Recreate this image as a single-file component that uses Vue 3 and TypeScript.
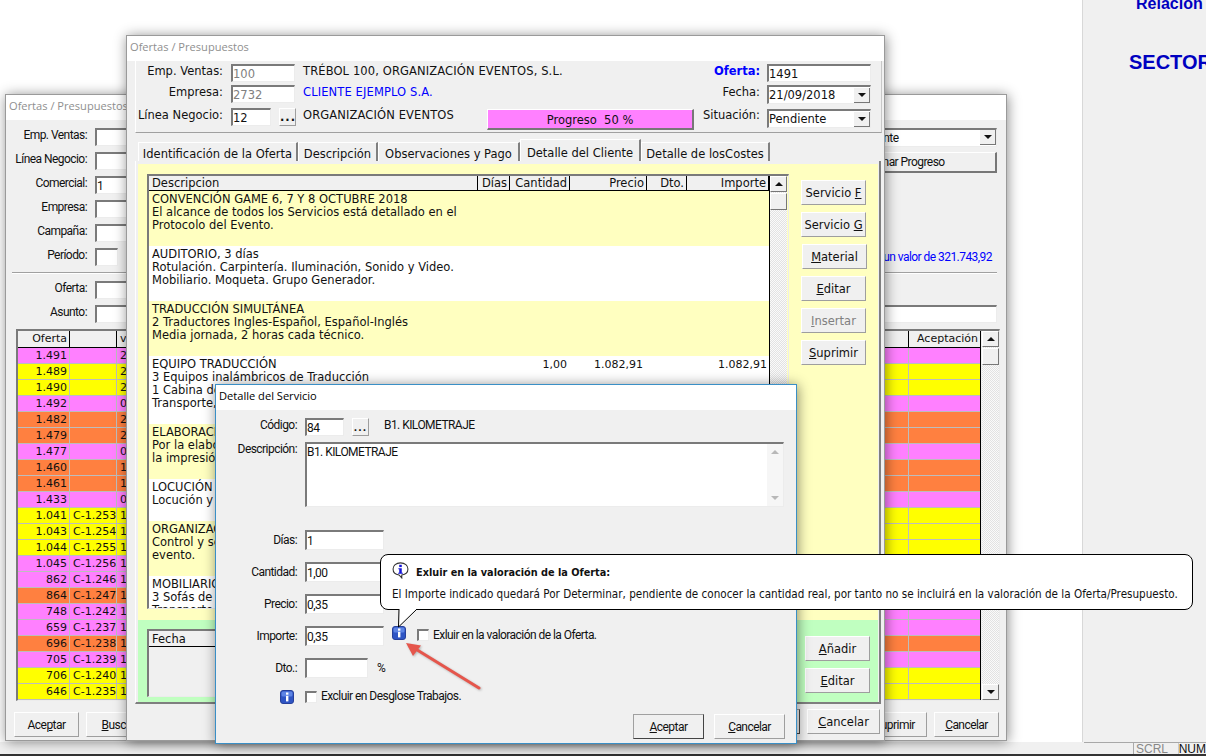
<script setup lang="ts">
type Tone = 'pink' | 'yellow' | 'orange'
interface Offer { id: string; ref: string; date: string; tone: Tone }
interface Line { lines: string[]; qty?: string; price?: string; total?: string }

const offers: Offer[] = [
  { id: '1.491', ref: '', date: '21/09/2018', tone: 'pink' },
  { id: '1.489', ref: '', date: '21/09/2018', tone: 'yellow' },
  { id: '1.490', ref: '', date: '21/09/2018', tone: 'yellow' },
  { id: '1.492', ref: '', date: '01/10/2018', tone: 'pink' },
  { id: '1.482', ref: '', date: '20/07/2018', tone: 'orange' },
  { id: '1.479', ref: '', date: '20/07/2018', tone: 'orange' },
  { id: '1.477', ref: '', date: '02/07/2018', tone: 'pink' },
  { id: '1.460', ref: '', date: '15/05/2018', tone: 'orange' },
  { id: '1.461', ref: '', date: '15/05/2018', tone: 'orange' },
  { id: '1.433', ref: '', date: '09/04/2018', tone: 'pink' },
  { id: '1.041', ref: 'C-1.253', date: '10/11/2017', tone: 'yellow' },
  { id: '1.043', ref: 'C-1.254', date: '10/11/2017', tone: 'yellow' },
  { id: '1.044', ref: 'C-1.255', date: '10/11/2017', tone: 'yellow' },
  { id: '1.045', ref: 'C-1.256', date: '10/11/2017', tone: 'pink' },
  { id: '862', ref: 'C-1.246', date: '12/06/2017', tone: 'pink' },
  { id: '864', ref: 'C-1.247', date: '12/06/2017', tone: 'orange' },
  { id: '748', ref: 'C-1.242', date: '10/03/2017', tone: 'pink' },
  { id: '659', ref: 'C-1.237', date: '10/01/2017', tone: 'pink' },
  { id: '696', ref: 'C-1.238', date: '10/01/2017', tone: 'orange' },
  { id: '705', ref: 'C-1.239', date: '10/01/2017', tone: 'pink' },
  { id: '706', ref: 'C-1.240', date: '10/01/2017', tone: 'yellow' },
  { id: '646', ref: 'C-1.235', date: '10/01/2017', tone: 'yellow' },
]

const details: Line[] = [
  { lines: ['CONVENCIÓN GAME 6, 7 Y 8 OCTUBRE 2018', 'El alcance de todos los Servicios está detallado en el', 'Protocolo del Evento.'] },
  { lines: ['AUDITORIO, 3 días', 'Rotulación. Carpintería. Iluminación, Sonido y Video.', 'Mobiliario. Moqueta. Grupo Generador.'] },
  { lines: ['TRADUCCIÓN SIMULTÁNEA', '2 Traductores Ingles-Español, Español-Inglés', 'Media jornada, 2 horas cada técnico.'] },
  { lines: ['EQUIPO TRADUCCIÓN', '3 Equipos inalámbricos de Traducción', '1 Cabina de Traducción', 'Transporte, montaje y desmontaje.'], qty: '1,00', price: '1.082,91', total: '1.082,91' },
  { lines: ['ELABORACIÓN DE TEXTOS', 'Por la elaboración de los textos y', 'la impresión de los mismos.'] },
  { lines: ['LOCUCIÓN', 'Locución y grabación.'] },
  { lines: ['ORGANIZACIÓN', 'Control y seguimiento del', 'evento.'] },
  { lines: ['MOBILIARIO', '3 Sofás de piel', 'Transporte incluido.'] },
]

const sideButtons = [
  { pre: 'Servicio ', key: 'F', post: '', extra: '' },
  { pre: 'Servicio ', key: 'G', post: '', extra: '' },
  { pre: '', key: 'M', post: 'aterial', extra: 'shift' },
  { pre: '', key: 'E', post: 'ditar', extra: '' },
  { pre: '', key: 'I', post: 'nsertar', extra: 'off' },
  { pre: '', key: 'S', post: 'uprimir', extra: '' },
]
</script>

<template>
  <div class="screen">
    <div class="workspace">
      <div class="desk"></div>
      <aside class="sidepanel">
        <div class="rel">Relacion</div>
        <div class="sector">SECTOR</div>
      </aside>
    </div>
    <footer class="status">
      <span class="cell scrl">SCRL</span>
      <span class="cell numlock">NUM</span>
    </footer>
    <div class="strip"></div>

    <!-- Ventana trasera -->
    <section class="win win-a narrow">
      <header class="title muted">Ofertas / Presupuestos</header>
      <div class="filters">
        <div class="frow"><label>Emp. Ventas:</label><div class="field w100"></div><div class="field combo a-combo"><span>Pendiente</span><i class="drop"></i></div></div>
        <div class="frow"><label>Línea Negocio:</label><div class="field w100"></div><button class="btn prog">Determinar Progreso</button></div>
        <div class="frow"><label>Comercial:</label><div class="field w100">1</div></div>
        <div class="frow"><label>Empresa:</label><div class="field w100"></div></div>
        <div class="frow"><label>Campaña:</label><div class="field w100"></div></div>
        <div class="frow"><label>Período:</label><div class="field w23"></div><span class="sum">22 Ofertas por un valor de 321.743,92</span></div>
      </div>
      <div class="sep"></div>
      <div class="filters two">
        <div class="frow"><label>Oferta:</label><div class="field w100"></div></div>
        <div class="frow"><label>Asunto:</label><div class="field wfull"></div></div>
      </div>
      <div class="gridA">
        <div class="tableA">
          <div class="ohead">
            <span class="r">Oferta</span><span></span><span class="l">vencimiento</span><span class="r">Aceptación</span>
          </div>
          <div v-for="o in offers" :key="o.id" class="orow" :class="o.tone">
            <span class="r">{{ o.id }}</span><span class="l">{{ o.ref }}</span><span class="l">{{ o.date }}</span><span></span>
          </div>
          <div class="tail"></div>
        </div>
        <div class="vbar a">
          <i class="sb up"></i><i class="thumb"></i><b></b><i class="sb down"></i>
        </div>
      </div>
      <div class="footA">
        <button class="btn b65">Ace<u>p</u>tar</button>
        <button class="btn b65"><u>B</u>uscar</button>
        <span class="grow"></span>
        <button class="btn b65"><u>S</u>uprimir</button>
        <button class="btn b65"><u>C</u>ancelar</button>
      </div>
    </section>

    <!-- Ventana principal -->
    <section class="win win-b">
      <header class="title muted">Ofertas / Presupuestos</header>
      <div class="head">
        <div class="hrow r1">
          <label>Emp. Ventas:</label><div class="field w64 dis">100</div>
          <span class="htxt">TRÉBOL 100, ORGANIZACIÓN EVENTOS, S.L.</span>
          <label class="rl blue">Oferta:</label><div class="field w104">1491</div>
        </div>
        <div class="hrow r2">
          <label>Empresa:</label><div class="field w64 dis">2732</div>
          <span class="htxt link">CLIENTE EJEMPLO S.A.</span>
          <label class="rl">Fecha:</label><div class="field combo w104"><span>21/09/2018</span><i class="drop"></i></div>
        </div>
        <div class="hrow r3">
          <label>Línea Negocio:</label><div class="field w40">12</div><button class="btn dots">...</button>
          <span class="htxt short">ORGANIZACIÓN EVENTOS</span>
          <div class="progress">Progreso&nbsp;&nbsp;50 %</div>
          <label class="rl narrow-l">Situación:</label><div class="field combo w104"><span>Pendiente</span><i class="drop"></i></div>
        </div>
      </div>
      <nav class="tabs">
        <span class="tab t1">Identificación de la Oferta</span>
        <span class="tab t2">Descripción</span>
        <span class="tab t3">Observaciones y Pago</span>
        <span class="tab t4 on">Detalle del Cliente</span>
        <span class="tab t5">Detalle de losCostes</span>
      </nav>
      <div class="panel">
        <div class="yellow">
          <div class="gridB">
            <div class="tableB">
              <div class="dhead">
                <span>Descripcion</span><span class="r">Días</span><span class="r">Cantidad</span><span class="r">Precio</span><span class="r">Dto.</span><span class="r">Importe</span>
              </div>
              <div class="dbody">
                <div v-for="(d, i) in details" :key="i" class="drow" :class="{ odd: i % 2 === 0 }">
                  <div class="dtext"><div v-for="l in d.lines" :key="l">{{ l }}</div></div>
                  <span></span>
                  <span class="r c-q">{{ d.qty }}</span>
                  <span class="r c-p">{{ d.price }}</span>
                  <span></span>
                  <span class="r c-t">{{ d.total }}</span>
                </div>
              </div>
            </div>
            <div class="vbar b">
              <i class="sb up"></i><i class="thumb"></i><b></b>
            </div>
          </div>
          <div class="sidebtns">
            <button v-for="b in sideButtons" :key="b.key" class="btn b65" :class="b.extra">{{ b.pre }}<u>{{ b.key }}</u>{{ b.post }}</button>
          </div>
        </div>
        <div class="green">
          <div class="gridC"><div class="chead">Fecha</div></div>
          <div class="greenbtns">
            <button class="btn b65"><u>A</u>ñadir</button>
            <button class="btn b65"><u>E</u>ditar</button>
          </div>
        </div>
      </div>
      <div class="footB">
        <button class="btn b73 def"><u>A</u>ceptar</button>
        <button class="btn b73"><u>C</u>ancelar</button>
      </div>
    </section>

    <!-- Diálogo -->
    <section class="win dlg narrow">
      <header class="title">Detalle del Servicio</header>
      <div class="dbodyform">
        <div class="drow2 cod">
          <label>Código:</label><div class="field w39">84</div><button class="btn dots">...</button><span class="codtxt">B1. KILOMETRAJE</span>
        </div>
        <div class="drow2 desc">
          <label>Descripción:</label>
          <div class="field area">
            <span>B1. KILOMETRAJE</span>
            <div class="fadebar"><i></i><i class="dn"></i></div>
          </div>
        </div>
        <div class="drow2 numrow first"><label>Días:</label><div class="field w79">1</div></div>
        <div class="drow2 numrow"><label>Cantidad:</label><div class="field w79">1,00</div></div>
        <div class="drow2 numrow"><label>Precio:</label><div class="field w79">0,35</div></div>
        <div class="drow2 numrow">
          <label>Importe:</label><div class="field w79">0,35</div>
          <svg class="info after" viewBox="0 0 14 14" aria-hidden="true"><rect x=".5" y=".5" width="13" height="13" rx="2.5" fill="#2f55c4" stroke="#27409a"/><rect x="1.5" y="1.5" width="11" height="5" rx="1.5" fill="#5d84e4"/><rect x="6" y="2.5" width="2.4" height="2.2" fill="#fff"/><rect x="6" y="5.8" width="2.4" height="5.6" fill="#fff"/></svg>
          <span class="check"></span><span class="chk-l">Exluir en la valoración de la Oferta.</span>
        </div>
        <div class="drow2 numrow">
          <label>Dto.:</label><div class="field w63"></div><span class="pct">%</span>
        </div>
        <div class="drow2 last">
          <div class="iconcell">
            <svg class="info" viewBox="0 0 14 14" aria-hidden="true"><rect x=".5" y=".5" width="13" height="13" rx="2.5" fill="#2f55c4" stroke="#27409a"/><rect x="1.5" y="1.5" width="11" height="5" rx="1.5" fill="#5d84e4"/><rect x="6" y="2.5" width="2.4" height="2.2" fill="#fff"/><rect x="6" y="5.8" width="2.4" height="5.6" fill="#fff"/></svg>
          </div>
          <span class="check first-c"></span><span class="chk-l">Excluir en Desglose Trabajos.</span>
        </div>
        <div class="dfoot">
          <button class="btn b71 def"><u>A</u>ceptar</button>
          <button class="btn b71"><u>C</u>ancelar</button>
        </div>
      </div>
    </section>

    <!-- Globo de ayuda -->
    <div class="tip">
      <svg class="tipicon" viewBox="0 0 16 16" aria-hidden="true">
        <path d="M8 .8C3.8.8 1 3.3 1 6.600c0 3 2.300 5.200 5.600 5.600l2.600 2.800v-2.800c3.400-.4 5.800-2.600 5.800-5.600C15 3.300 12.200.8 8 .8z" fill="#fff" stroke="#333" stroke-width="1"/>
        <rect x="6.800" y="2.600" width="2.400" height="2.200" fill="#1515d8"/>
        <path d="M6 5.800h3.200v4.200H10.200v1H5.800v-1h1V6.800H6z" fill="#1515d8"/>
      </svg>
      <div class="tiptitle">Exluir en la valoración de la Oferta:</div>
      <div class="tipbody">El Importe indicado quedará Por Determinar, pendiente de conocer la cantidad real, por tanto no se incluirá en la valoración de la Oferta/Presupuesto.</div>
      <svg class="tiptail" viewBox="0 0 24 22" aria-hidden="true">
        <path d="M3 0 L2.500 18 L21 0" fill="#fff"/>
        <path d="M3 0 L2.500 18 L21 0" fill="none" stroke="#000" stroke-width="1"/>
      </svg>
    </div>

    <!-- Flecha -->
    <svg class="arrow" viewBox="0 0 90 60" aria-hidden="true">
      <path d="M77 50 L12 10" stroke="#e5564c" stroke-width="3" stroke-linecap="round"/>
      <path d="M4 5 L19 7.500 L11 18 Z" fill="#e5564c"/>
    </svg>
  </div>
</template>

<style>
html, body { margin: 0; padding: 0; background: #fff; overflow: hidden; }
</style>

<style scoped>
.screen {
  position: relative;
  width: 1206px;
  height: 756px;
  overflow: hidden;
  display: flex;
  flex-direction: column;
  font-family: "DejaVu Sans", Verdana, sans-serif;
  font-size: 11.500px;
  color: #111;
  background: #f0f0f0;
}
.workspace { flex: 1; display: flex; min-height: 0; }
.desk { flex: 1; background: #fff; }
.sidepanel {
  width: 124px;
  box-sizing: border-box;
  border-left: 1px solid #d8d8d8;
  box-shadow: -1px 0 0 #fff;
  background: #f0f0f0;
  padding-left: 46px;
  font-family: "Liberation Sans", Arial, sans-serif;
  font-weight: 700;
  color: #0000c0;
  white-space: nowrap;
  overflow: hidden;
}
.rel { font-size: 16px; line-height: 16px; margin: -4px 0 0 7px; }
.sector { font-size: 20px; line-height: 24px; margin-top: 38px; margin-left: 0; }
.status {
  height: 11px;
  flex: none;
  border-top: 1px solid #a8a8a8;
  margin-left: 1084px;
  display: flex;
  font-family: "Liberation Sans", Arial, sans-serif;
  font-size: 12px;
  line-height: 11px;
  overflow: hidden;
}
.cell { border-left: 1px solid #aaa; }
.scrl { margin-left: 49px; padding: 1px 0 0 2px; color: #888; width: 41px; box-sizing: border-box; }
.numlock { margin-left: 9px; padding: 1px 0 0 0; color: #111; border-left-color: #ccc; }
.strip { height: 2px; flex: none; background: #333; }

.win {
  position: absolute;
  box-sizing: border-box;
  background: #f0f0f0;
  border: 1px solid #9a9a9a;
  box-shadow: 1px 1px 12px rgba(0, 0, 0, .45);
  display: flex;
  flex-direction: column;
}
.win-a { left: 5px; top: 94px; width: 1002px; height: 647px; }
.win-b { left: 126px; top: 35px; width: 759px; height: 706px; }
.dlg { left: 215px; top: 384px; width: 582px; height: 360px; border-color: #3a8fc6; }
.title {
  height: 25px;
  flex: none;
  background: #fff;
  font-family: "Open Sans", "Noto Sans", sans-serif;
  font-size: 11.100px;
  line-height: 22px;
  padding-left: 3px;
  white-space: nowrap;
  color: #000;
}
.title.muted { color: #8f8f8f; }
.narrow { font-family: Roboto, "Liberation Sans", sans-serif; font-size: 12px; letter-spacing: -.55px; }
.narrow .title { font-family: "Open Sans", "Noto Sans", sans-serif; font-size: 11.100px; letter-spacing: 0; }

.field {
  box-sizing: border-box;
  background: #fff;
  border-style: solid;
  border-width: 2px 1px 1px 2px;
  border-color: #7a7a7a #ececec #ececec #7a7a7a;
  padding-left: 0;
  overflow: hidden;
  white-space: nowrap;
  display: flex;
  align-items: center;
  flex: none;
}
.combo { justify-content: space-between; padding-right: 0; }
.drop {
  width: 16px;
  height: 15px;
  flex: none;
  background: #f0f0f0;
  border-right: 1px solid #777;
  border-bottom: 1px solid #777;
  box-sizing: border-box;
  position: relative;
}
.drop::after, .sb::after {
  content: "";
  position: absolute;
  left: 50%;
  top: 50%;
  margin: -2px 0 0 -4px;
  border-left: 4px solid transparent;
  border-right: 4px solid transparent;
  border-top: 4px solid #111;
}
.sb.up::after { border-top: 0; border-bottom: 4px solid #111; }

.btn {
  box-sizing: border-box;
  height: 25px;
  padding: 0;
  font: inherit;
  letter-spacing: inherit;
  color: #111;
  background: #f0f0f0;
  border: 1px solid;
  border-color: #fff #9e9e9e #9e9e9e #fff;
  white-space: nowrap;
  flex: none;
}
.btn u { text-underline-offset: 1px; }
.b65 { width: 65px; }
.b73 { width: 73px; }
.b71 { width: 71px; }
.def { border-color: #a0a0a0 #444 #444 #a0a0a0; }
.dots {
  width: 17px;
  height: 18px;
  line-height: 12px;
  font-weight: 700;
  letter-spacing: 1px;
}

/* ventana trasera */
.filters {
  display: grid;
  grid-auto-rows: 18px;
  row-gap: 6px;
  padding-top: 8px;
}
.filters.two { padding-top: 0; margin-top: 7px; }
.frow { display: flex; align-items: center; padding-right: 9px; }
.frow label { width: 81px; margin-right: 8px; margin-top: -4px; text-align: right; flex: none; }
.frow .field { height: 18px; }
.w100 { width: 100px; }
.w23 { width: 23px; }
.wfull { width: 902px; }
.a-combo { width: 149px; margin-left: auto; height: 19px !important; }
.prog {
  margin-left: auto;
  width: 204px;
  height: 21px;
  align-self: flex-start;
  border-color: #fff #777 #777 #fff;
  border-width: 1px 2px 2px 1px;
}
.sum { margin-left: auto; margin-right: 5px; color: #0000ff; }
.sep {
  margin: 6px 9px 0 6px;
  height: 0;
  border-top: 1px solid #a0a0a0;
  border-bottom: 1px solid #fff;
}
.gridA {
  margin: 6px 0 0 10px;
  width: 984px;
  height: 372px;
  box-sizing: border-box;
  border-style: solid;
  border-width: 2px 1px 1px 2px;
  border-color: #7a7a7a #ececec #ececec #7a7a7a;
  display: flex;
  background: #f0f0f0;
  flex: none;
}
.tableA {
  width: 964px;
  box-sizing: border-box;
  border-right: 1px solid #000;
  background: #f0f0f0;
  overflow: hidden;
  font-family: "DejaVu Sans", Verdana, sans-serif;
  font-size: 11px;
  letter-spacing: 0;
  margin-right: 1px;
}
.ohead, .orow {
  display: grid;
  grid-template-columns: 52px 47px 792px 72px;
  white-space: nowrap;
}
.ohead { height: 16px; line-height: 16px; border-bottom: 1px solid #000; }
.ohead span { border-right: 1px solid #000; overflow: hidden; }
.orow { height: 16px; box-sizing: border-box; line-height: 15px; border-bottom: 1px solid #bdbdbd; }
.orow span { border-right: 1px solid #bdbdbd; overflow: hidden; }
.r { text-align: right; padding-right: 2px; }
.l { text-align: left; padding-left: 3px; }
.pink { background: #ff80ff; }
.orow.yellow { background: #ffff00; }
.orange { background: #ff8040; }
.tail { height: 1px; background: #e080e0; }
.vbar {
  width: 17px;
  flex: none;
  display: flex;
  flex-direction: column;
  background-color: #f2f2f2;
  background-image: repeating-conic-gradient(#e2e2e2 0 25%, #fafafa 0 50%);
  background-size: 2px 2px;
}
.vbar b { flex: 1; }
.sb {
  position: relative;
  display: block;
  height: 16px;
  box-sizing: border-box;
  background: #f0f0f0;
  border: 1px solid;
  border-color: #fff #777 #777 #fff;
  flex: none;
}
.thumb {
  display: block;
  height: 17px;
  margin-top: 1px;
  box-sizing: border-box;
  background: #f0f0f0;
  border: 1px solid;
  border-color: #fff #777 #777 #fff;
  flex: none;
}
.footA {
  display: flex;
  margin-top: 11px;
  padding: 0 7px 0 8px;
  gap: 7px;
}
.grow { flex: 1; }

/* ventana principal */
.head {
  margin-left: 8px;
  width: 747px;
  height: 72px;
  flex: none;
  box-sizing: border-box;
  border-bottom: 1px solid #a0a0a0;
  border-left: 1px solid #fff;
  border-right: 1px solid #c8c8c8;
  display: flex;
  flex-direction: column;
  padding-top: 3px;
  white-space: nowrap;
}
.hrow { display: flex; align-items: flex-start; }
.r2 { margin-top: 3px; height: 20px; }
.r3 { margin-top: 3px; }
.r1 { height: 18px; }
.hrow label { width: 87px; text-align: right; margin-right: 8px; flex: none; }
.hrow .field { height: 18px; }
.hrow .combo { height: 19px; }
.r3 .combo { margin-top: 1px; }
.w64 { width: 64px; }
.w40 { width: 40px; }
.w104 { width: 104px; }
.dis { color: #808080; }
.htxt { margin-left: 8px; width: 360px; flex: none; letter-spacing: .12px; }
.hrow .rl { width: 97px; margin-right: 7px; margin-left: 0; }
.htxt.short { width: 184px; margin-left: 7px; }
.link { color: #0000ff; }
.blue { color: #0000ff; font-weight: 700; }
.r3 .dots { margin-left: 8px; }
.progress {
  width: 207px;
  height: 21px;
  flex: none;
  box-sizing: border-box;
  background: #ff80ff;
  border: 1px solid;
  border-width: 1px 2px 2px 1px;
  border-color: #fff #777 #777 #fff;
  text-align: center;
  line-height: 20px;
  margin-top: 1px;
}
.hrow .narrow-l { width: 66px; margin-right: 7px; }
.tabs { display: flex; align-items: flex-end; height: 28px; margin-left: 11px; flex: none; }
.tab {
  box-sizing: border-box;
  height: 19px;
  line-height: 22px;
  text-align: center;
  white-space: nowrap;
  overflow: hidden;
  border-right: 2px solid #808080;
  border-left: 1px solid #fff;
  border-top: 1px solid #fff;
  flex: none;
}
.t1 { width: 160px; }
.t2 { width: 80px; }
.t3 { width: 142px; }
.t4 { width: 121px; }
.t5 { width: 129px; }
.tab.on { height: 22px; line-height: 26px; }
.panel {
  margin-left: 8px;
  width: 746px;
  height: 543px;
  flex: none;
  box-sizing: border-box;
  padding: 3px 1px 2px 2px;
  border-style: solid;
  border-width: 0 2px 2px 0;
  border-color: #7f7f7f;
  border-left: 1px solid #fff;
  background: #f0f0f0;
  display: flex;
  flex-direction: column;
}
.panel .yellow {
  background: #ffffc0;
  height: 456px;
  flex: none;
  display: flex;
  align-items: flex-start;
  padding: 10px 0 0 9px;
  box-sizing: border-box;
}
.gridB {
  width: 642px;
  height: 435px;
  flex: none;
  box-sizing: border-box;
  border-style: solid;
  border-width: 2px 1px 1px 2px;
  border-color: #7a7a7a #ececec #ececec #7a7a7a;
  display: flex;
}
.tableB {
  width: 621px;
  flex: none;
  box-sizing: border-box;
  border-right: 1px solid #000;
  overflow: hidden;
  background: #fff;
}
.dhead, .drow {
  display: grid;
  grid-template-columns: 329px 32px 60px 77px 40px 82px;
  white-space: nowrap;
}
.dhead {
  height: 14px;
  line-height: 15px;
  background: #f0f0f0;
  border-bottom: 1px solid #000;
  box-sizing: content-box;
}
.dhead span { border-right: 1px solid #000; padding-left: 3px; box-sizing: border-box; overflow: hidden; }
.dhead .r { padding-left: 0; padding-right: 2px; }
.drow { line-height: 13px; padding: 2px 0 14px; background: #fff; }
.drow.odd { background: #ffffc0; }
.dtext { padding-left: 3px; }
.drow .r { font-size: 11px; }
.c-q { padding-right: 3px; }
.drow .c-p { padding-right: 4px; }
.drow .c-t { padding-right: 2px; }
.drow .c-q { padding-right: 3px; }
.sidebtns {
  margin: 6px 0 0 12px;
  display: flex;
  flex-direction: column;
  gap: 7px;
}
.shift { margin-left: 1px; }
.off { color: #808080; }
.green {
  height: 82px;
  flex: none;
  background: #c0ffc0;
  box-sizing: border-box;
  padding: 9px 0 0 9px;
  display: flex;
  align-items: flex-start;
}
.gridC {
  width: 642px;
  height: 68px;
  flex: none;
  box-sizing: border-box;
  border-style: solid;
  border-width: 2px 1px 1px 2px;
  border-color: #7a7a7a #ececec #ececec #7a7a7a;
  background: #f0f0f0;
}
.chead {
  height: 15px;
  line-height: 17px;
  padding-left: 3px;
  border-bottom: 1px solid #000;
}
.greenbtns {
  margin: 7px 0 0 16px;
  display: flex;
  flex-direction: column;
  gap: 7px;
}
.footB {
  display: flex;
  justify-content: flex-end;
  gap: 7px;
  margin-top: 5px;
  padding-right: 4px;
}

/* diálogo */
.dbodyform { padding-top: 8px; display: flex; flex-direction: column; }
.drow2 { display: flex; align-items: center; flex: none; white-space: nowrap; }
.drow2 label { width: 81px; margin-right: 8px; text-align: right; flex: none; }
.cod { height: 18px; }
.cod label { margin-top: -4px; }
.w39 { width: 39px; height: 18px; }
.cod .dots { margin-left: 8px; }
.codtxt { margin-left: 15px; margin-top: -4px; }
.desc { margin-top: 6px; height: 65px; align-items: flex-start; }
.area {
  width: 479px;
  height: 65px;
  align-items: flex-start;
  justify-content: space-between;
  padding-right: 0;
  line-height: 16px;
}
.fadebar {
  width: 16px;
  height: 100%;
  flex: none;
  background: #f6f6f6;
  display: flex;
  flex-direction: column;
  justify-content: space-between;
  align-items: center;
  padding: 6px 0;
  box-sizing: border-box;
}
.fadebar i {
  border-left: 4px solid transparent;
  border-right: 4px solid transparent;
  border-bottom: 4px solid #b8b8b8;
}
.fadebar .dn { border-bottom: 0; border-top: 4px solid #b8b8b8; }
.numrow { height: 20px; margin-top: 12px; }
.numrow.first { margin-top: 23px; }
.numrow .field { height: 20px; }
.w79 { width: 79px; }
.w63 { width: 63px; }
.pct { margin-left: 9px; }
.info { width: 14px; height: 14px; flex: none; display: block; }
.info.after { margin-left: 8px; margin-top: -6px; }
.check {
  width: 12px;
  height: 12px;
  flex: none;
  box-sizing: border-box;
  background: #fff;
  border-style: solid;
  border-width: 2px 1px 1px 2px;
  border-color: #7a7a7a #ececec #ececec #7a7a7a;
  margin-left: 11px;
  margin-top: -2px;
}
.check.first-c { margin-left: 0; margin-top: 0; }
.chk-l { margin-left: 4px; margin-top: -2px; }
.last { margin-top: 12px; height: 14px; }
.iconcell {
  width: 89px;
  display: flex;
  justify-content: flex-end;
  padding-right: 11px;
  box-sizing: border-box;
  flex: none;
}
.dfoot {
  margin-top: 10px;
  display: flex;
  justify-content: flex-end;
  gap: 10px;
  padding-right: 11px;
}

/* globo */
.tip {
  position: absolute;
  left: 380px;
  top: 554px;
  width: 813px;
  height: 56px;
  box-sizing: border-box;
  background: #fff;
  border: 1px solid #000;
  border-radius: 8px;
  font-family: "DejaVu Sans Condensed", "DejaVu Sans", sans-serif;
  font-stretch: condensed;
  font-size: 11.600px;
  color: #111;
  white-space: nowrap;
}
.tipicon { position: absolute; left: 11px; top: 7px; width: 17px; height: 17px; }
.tiptitle { padding: 11px 0 0 35px; font-size: 10.800px; font-weight: 700; line-height: 14px; }
.tipbody { padding: 7px 0 0 11px; line-height: 14px; }
.tiptail { position: absolute; left: 15px; top: 54px; width: 24px; height: 22px; }
.arrow { position: absolute; left: 402px; top: 638px; width: 90px; height: 60px; overflow: visible; filter: drop-shadow(1px 1px 1px rgba(0,0,0,.25)); }
</style>
